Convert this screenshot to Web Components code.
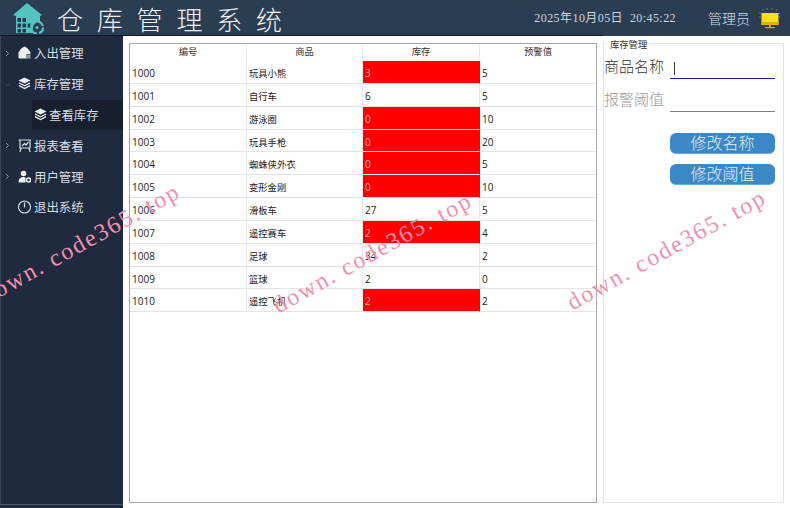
<!DOCTYPE html>
<html lang="zh">
<head>
<meta charset="utf-8">
<title>仓库管理系统</title>
<style>
  html, body { margin: 0; height: 100%; background: #fff; }
  body { font-family: "Noto Sans CJK SC", sans-serif; overflow: hidden; }
</style>
</head>
<body>
<wms-app></wms-app>
<script>
const CJK = '"Noto Sans CJK SC", sans-serif';

class WmsHeader extends HTMLElement {
  constructor() {
    super();
    this.attachShadow({mode: "open"}).innerHTML = `
      <style>
      :host { display: flex; align-items: center; height: 36px; flex: none; background: linear-gradient(#10171f, #10171f) no-repeat left bottom / 603px 1px, #2b3d53; color: #e9eef2; }
      svg { display: block; flex: none; }
      .logo { margin-left: 13px; }
      h1 { margin: 0 0 0 12px; font: 300 26px/35px ${CJK}; letter-spacing: 13.8px; color: #eef2f4; flex: 1; white-space: nowrap; }
      .time { font: 12px/36px "Liberation Serif", "Noto Sans CJK SC", serif; letter-spacing: .43px; color: #cdd5dc; margin-right: 32px; white-space: pre; }
      .user { font: 300 14px/36px ${CJK}; color: #d5dde3; margin-right: 9px; white-space: nowrap; }
      .lamp { margin: 2px 9px 0 0; }
      </style>
      <svg class="logo" width="32" height="32" viewBox="0 0 32 32">
        <path d="M0 13 14 1l15 12-2 1v5.500a8 8 0 0 0-7 5.500 8 8 0 0 0 .5 6H3V14z" fill="#54c3c0"/>
        <path d="M4.500 16h3.500v4H4.500zM9.500 16H13v4H9.500zM4.500 21.500h3.500v4H4.500zM9.500 21.500H13v4H9.500zM14.500 21.500H18v4h-3.500zM4.500 27h3.500v3.500H4.500zM9.500 27H13v3.500H9.500z" fill="#24384e"/>
        <circle cx="24" cy="25.500" r="6" fill="none" stroke="#54c3c0" stroke-width="2.200" stroke-dasharray="7 2.400"/>
        <circle cx="24" cy="25.500" r="1.500" fill="#54c3c0"/>
      </svg>
      <h1>仓库管理系统</h1>
      <span class="time">2025年10月05日  20:45:22</span>
      <span class="user">管理员</span>
      <svg class="lamp" width="22" height="24" viewBox="0 0 22 24">
        <rect x="2.500" y="6" width="17" height="12" rx=".5" fill="#f5e01a"/>
        <path d="M2.500 15h17v3h-17z" fill="#d8b40e"/>
        <path d="M10 18h2v2h-2zM6 20h10v1.200H6z" fill="#c9a92c"/>
        <path d="M4 2.500l1 1.500M8 1.500l.5 1.500M13 1.500 12.500 3M18 2.500l-1 1.500M.5 6H2M20 6h1.500M.5 10H2M20 10h1.500" stroke="#8d9a4a" stroke-width="1.200" stroke-dasharray="1 1"/>
      </svg>`;
  }
}

const ICONS = {
  box: `<path d="M.5 6.500C2 3.500 4 1.500 6.500.5 9 1.500 11 3.500 12.500 6.500V8H8.500v4.500H2C1 12.500.5 12 .5 11z" fill="#eef1f4"/><path d="M8 8.500h4.500v4H8z" fill="#8f9aa6"/>`,
  layers: `<path d="M6.500 .5 12.500 3.500 6.500 6.500 .5 3.500z" fill="#eef1f4"/><path d="M1 6 6.500 8.800 12 6M1 8.700 6.500 11.500 12 8.700" fill="none" stroke="#eef1f4" stroke-width="1.300"/>`,
  cart: `<path d="M.5 1h13M2 1v8h10V1M3 9l-1 4M11 9l1 4M4 7l2.500-2.500L8 6l2.500-3" fill="none" stroke="#d8dee4" stroke-width="1.200"/>`,
  user: `<circle cx="5.500" cy="3.500" r="2.800" fill="#eef1f4"/><path d="M.5 12.500c0-3.800 2-5.500 5-5.500 1 0 1.600.2 2 .5v5z" fill="#eef1f4"/><circle cx="10.500" cy="10" r="2" fill="none" stroke="#eef1f4" stroke-width="1.500"/>`,
  power: `<circle cx="6.500" cy="7" r="6" fill="none" stroke="#d8dee4" stroke-width="1.100"/><path d="M6.500 2.500V7.500" stroke="#d8dee4" stroke-width="1.200"/>`
};

class NavItem extends HTMLElement {
  constructor() {
    super();
    this.attachShadow({mode: "open"}).innerHTML = `
      <style>
      :host { display: flex; align-items: center; height: 30.800px; color: #d9dfe5; font: 12.400px/30px ${CJK}; white-space: nowrap; }
      :host([sub]) { margin-left: 31px; padding-left: 2px; background: #18202f; }
      .arrow { width: 17px; flex: none; display: flex; justify-content: center; padding-right: 4px; box-sizing: border-box; }
      :host([sub]) .arrow { display: none; }
      .icon { display: block; margin-right: 3px; flex: none; }
      :host([sub]) .icon { margin-right: 2px; }
      </style>
      <span class="arrow"></span>
      <svg class="icon" width="13" height="14" viewBox="0 0 13 14"></svg>
      <slot></slot>`;
  }
  connectedCallback() {
    this.shadowRoot.querySelector(".icon").innerHTML = ICONS[this.getAttribute("icon")];
    const arrow = this.getAttribute("arrow");
    if (arrow) {
      const d = arrow == "down" ? "M1 2.500 3.500 5 6 2.500" : "M2 1 4.500 3.500 2 6";
      this.shadowRoot.querySelector(".arrow").innerHTML = `<svg width="7" height="7" viewBox="0 0 7 7"><path d="${d}" fill="none" stroke="${arrow == "down" ? "#3a4658" : "#8a94a2"}"/></svg>`;
    }
  }
}

class SideNav extends HTMLElement {
  constructor() {
    super();
    this.attachShadow({mode: "open"}).innerHTML = `
      <style>
      :host { display: flex; flex-direction: column; width: 123px; flex: none; background: #1f2a3e; }
      .box { flex: 1; box-sizing: border-box; padding-top: 2px; margin-bottom: 3px; border-left: 1px solid #37465a; border-bottom: 1px solid #4b5a70; }
      </style>
      <div class="box">
        <nav-item icon="box" arrow="right">入出管理</nav-item>
        <nav-item icon="layers" arrow="down">库存管理</nav-item>
        <nav-item icon="layers" sub>查看库存</nav-item>
        <nav-item icon="cart" arrow="right">报表查看</nav-item>
        <nav-item icon="user" arrow="right">用户管理</nav-item>
        <nav-item icon="power">退出系统</nav-item>
      </div>`;
  }
}

const STOCK = [
  [1000, "玩具小熊", 3, 5, 1], [1001, "自行车", 6, 5], [1002, "游泳圈", 0, 10, 1],
  [1003, "玩具手枪", 0, 20, 1], [1004, "蜘蛛侠外衣", 0, 5, 1], [1005, "变形金刚", 0, 10, 1],
  [1006, "滑板车", 27, 5], [1007, "遥控赛车", 2, 4, 1], [1008, "足球", 34, 2],
  [1009, "篮球", 2, 0], [1010, "遥控飞机", 2, 2, 1]
];

class StockTable extends HTMLElement {
  constructor() {
    super();
    const head = ["编号", "商品", "库存", "预警值"].map(t => `<div class="th">${t}</div>`).join("");
    const rows = STOCK.map(r => `
      <div class="td num">${r[0]}</div>
      <div class="td">${r[1]}</div>
      <div class="td num ${r[4] ? "low" : ""}">${r[2]}</div>
      <div class="td num">${r[3]}</div>`).join("");
    this.attachShadow({mode: "open"}).innerHTML = `
      <style>
      :host { display: block; width: 468px; height: 460px; flex: none; box-sizing: border-box; border: 1px solid #a6a6a6; background: #fff; }
      .grid { display: grid; grid-template-columns: 117px 116px 117px 116px; grid-template-rows: 17px repeat(11, 22.850px); }
      .th { font: 9.300px/15px ${CJK}; color: #333; text-align: center; border-right: 1px solid #e8e8e8; }
      .th:nth-child(4n) { border-right: 0; }
      .td { font: 9.300px/25px ${CJK}; color: #222; padding-left: 2px; border-right: 1px solid #e8e8e8; border-bottom: 1px solid #e4e4e4; box-sizing: border-box; overflow: hidden; white-space: nowrap; }
      .num { font-family: "Open Sans", sans-serif; font-size: 10px; }
      .td:nth-child(4n) { border-right: 0; }
      .low { background: #fe0000; color: #f3b4b4; border-right-color: #fe0000; }
      </style>
      <div class="grid">${head}${rows}</div>`;
  }
}

class FieldRow extends HTMLElement {
  constructor() {
    super();
    this.attachShadow({mode: "open"}).innerHTML = `
      <style>
      :host { display: flex; align-items: flex-end; gap: 5px; height: 32.300px; }
      label { font: 300 15px/23px ${CJK}; color: #333; white-space: nowrap; width: 61px; margin-bottom: 2px; }
      .input { width: 105px; height: 24px; box-sizing: border-box; border-bottom: 1px solid #808080; }
      :host([active]) .input { border-bottom: 1.500px solid #1b1b8f; }
      :host([active]) .input::before { content: ""; display: block; width: 1px; height: 13px; margin: 7px 0 0 4px; background: #333; }
      :host(:not([active])) label { color: #9a9a9a; }
      </style>
      <label><slot></slot></label><div class="input"></div>`;
  }
}

class ActionButton extends HTMLElement {
  constructor() {
    super();
    this.attachShadow({mode: "open"}).innerHTML = `
      <style>
      :host { display: block; width: 105px; height: 21px; box-sizing: border-box; background: #3a88c6; border-radius: 6px; border-bottom: 1px solid #67a9db; color: #e4eef6; font: 300 16px/18px ${CJK}; text-align: center; }
      </style>
      <slot></slot>`;
  }
}

class StockPanel extends HTMLElement {
  constructor() {
    super();
    this.attachShadow({mode: "open"}).innerHTML = `
      <style>
      :host { display: block; width: 181px; height: 460px; flex: none; box-sizing: border-box; border: 1px solid #e3e3e3; padding: 0 8px 0 0; position: relative; }
      .legend { position: absolute; top: -6px; left: 3px; padding: 0 3px; background: #fff; font: 9.300px/13px ${CJK}; color: #333; }
      .fields { padding-top: 3px; display: flex; flex-direction: column; }
      .actions { display: flex; flex-direction: column; align-items: flex-end; gap: 10px; margin-top: 21px; }
      </style>
      <div class="legend">库存管理</div>
      <div class="fields">
        <field-row active>商品名称</field-row>
        <field-row>报警阈值</field-row>
      </div>
      <div class="actions">
        <action-button>修改名称</action-button>
        <action-button>修改阈值</action-button>
      </div>`;
  }
}

class WaterMark extends HTMLElement {
  constructor() {
    super();
    this.attachShadow({mode: "open"}).innerHTML = `
      <style>
      :host { display: block; position: absolute; white-space: nowrap; pointer-events: none; font: 24px/26px "Liberation Serif", serif; letter-spacing: 1.900px; color: #f48fb0; transform: rotate(-29deg); transform-origin: left bottom; }
      </style>
      <slot></slot>`;
  }
}

class WmsApp extends HTMLElement {
  constructor() {
    super();
    this.attachShadow({mode: "open"}).innerHTML = `
      <style>
      :host { display: flex; flex-direction: column; width: 790px; height: 508px; position: relative; overflow: hidden; background: #fff; }
      .body { display: flex; flex: 1; min-height: 0; }
      .main { display: flex; gap: 6px; padding: 7px 0 0 6px; align-items: flex-start; }
      .wm-1 { left: -11px; top: 283px; }
      .wm-2 { left: 281px; top: 292px; }
      .wm-3 { left: 575px; top: 289px; }
      </style>
      <wms-header></wms-header>
      <div class="body">
        <side-nav></side-nav>
        <div class="main">
          <stock-table></stock-table>
          <stock-panel></stock-panel>
        </div>
      </div>
      <water-mark class="wm-1">down. code365. top</water-mark>
      <water-mark class="wm-2">down. code365. top</water-mark>
      <water-mark class="wm-3">down. code365. top</water-mark>`;
  }
}

customElements.define("wms-header", WmsHeader);
customElements.define("nav-item", NavItem);
customElements.define("side-nav", SideNav);
customElements.define("stock-table", StockTable);
customElements.define("field-row", FieldRow);
customElements.define("action-button", ActionButton);
customElements.define("stock-panel", StockPanel);
customElements.define("water-mark", WaterMark);
customElements.define("wms-app", WmsApp);
</script>
</body>
</html>
